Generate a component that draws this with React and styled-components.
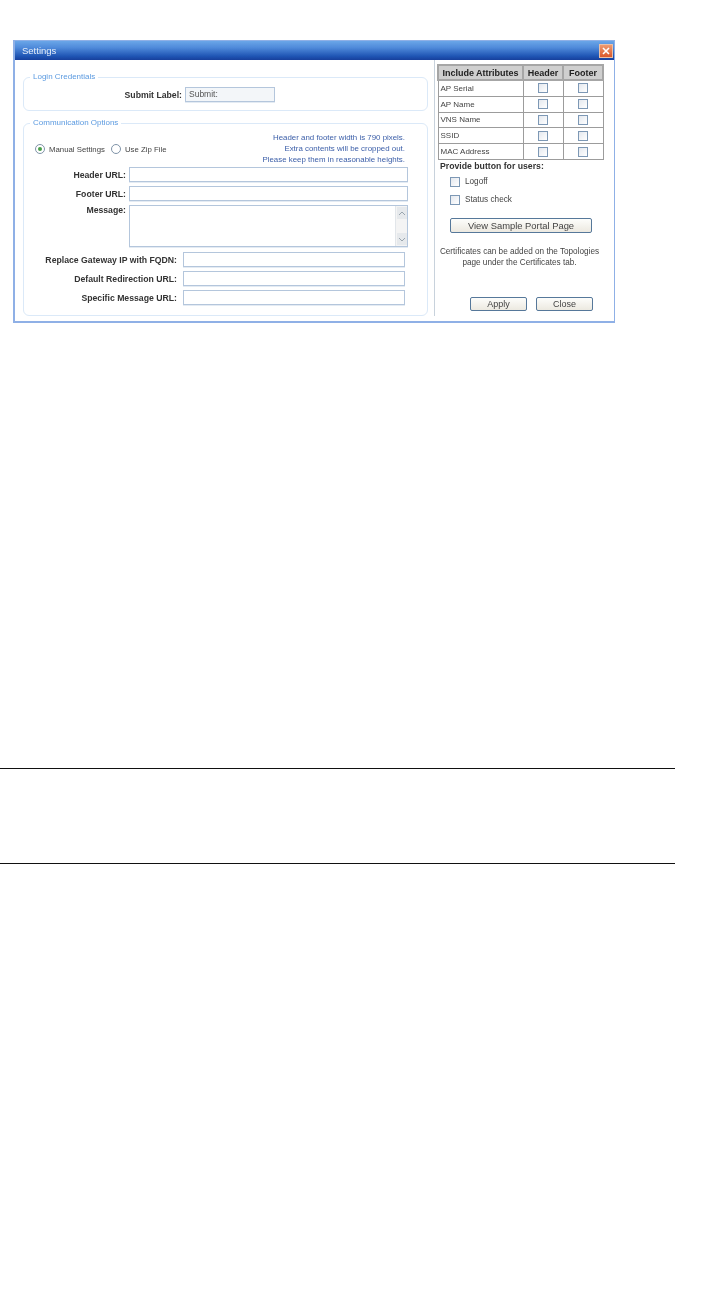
import React from 'react'
import styled, { createGlobalStyle } from 'styled-components'

const Global = createGlobalStyle`
  html, body { margin: 0; padding: 0; background: #fff; }
  body { font-family: "Liberation Sans", Arial, sans-serif; }
`

const Page = styled.div`
  width: 722px;
  height: 1314px;
  padding-top: 40px;
  box-sizing: border-box;
  overflow: hidden;
`

const Dialog = styled.div`
  width: 602px;
  height: 283px;
  margin-left: 13px;
  box-sizing: border-box;
  border: 1px solid #8fb0e6;
  border-bottom-width: 2px;
  border-left-width: 2px;
  display: flex;
  flex-direction: column;
  background: #fff;
  filter: blur(0.6px);
`

const TitleBar = styled.div`
  height: 19px;
  flex: none;
  display: flex;
  align-items: center;
  justify-content: space-between;
  padding: 0 1px 0 7px;
  background: linear-gradient(#6aa6e8 0%, #4f8ada 35%, #1f55b4 80%, #17409c 100%);
  color: #e8f0fb;
  font-size: 9.5px;
`

const CloseBox = styled.div`
  width: 14px;
  height: 14px;
  display: flex;
  align-items: center;
  justify-content: center;
  background: linear-gradient(#ee9a70, #d9582c);
  border: 1px solid #e9c0a8;
  box-sizing: border-box;
`

const Body = styled.div`
  flex: 1;
  display: flex;
  min-height: 0;
`

const LeftPane = styled.div`
  width: 419px;
  flex: none;
  box-sizing: border-box;
  padding: 13px 6px 0 8px;
  display: flex;
  flex-direction: column;
  gap: 8px;
`

const Group = styled.fieldset`
  margin: 0;
  padding: 0;
  border: 1px solid #dbe9f8;
  border-radius: 6px;
  height: ${p => p.$height}px;
  box-sizing: border-box;
  min-width: 0;
`

const Legend = styled.legend`
  margin-left: 6px;
  padding: 0 3px;
  font-size: 8px;
  line-height: 8px;
  color: #5b9ae0;
`

const LoginRow = styled.div`
  display: flex;
  align-items: center;
  gap: 3px;
  padding: 6px 0 0 98px;
`

const Label = styled.div`
  width: ${p => p.$width}px;
  margin-right: ${p => p.$after || 0}px;
  flex: none;
  text-align: right;
  font-size: 8.7px;
  font-weight: bold;
  line-height: 10px;
  color: #333;
  white-space: nowrap;
`

const Field = styled.div`
  width: ${p => p.$width}px;
  height: ${p => p.$height || 15}px;
  flex: none;
  box-sizing: border-box;
  border: 1px solid #b4c6dc;
  box-shadow: 0 1px 0 #e4ebf3;
  background: ${p => p.$tint ? '#f3f6f9' : '#fff'};
  font-size: 8.5px;
  line-height: 13px;
  padding-left: 3px;
  color: #555;
  display: flex;
  justify-content: ${p => p.$scroll ? 'flex-end' : 'flex-start'};
`

const OptionsTop = styled.div`
  display: flex;
  justify-content: space-between;
  height: 40px;
  padding: 5px 22px 0 11px;
  box-sizing: border-box;
`

const Radios = styled.div`
  display: flex;
  align-items: center;
  gap: 4px;
  height: 12px;
  margin-top: 11px;
  font-size: 7.8px;
  color: #444;
`

const Radio = styled.span`
  width: 10px;
  height: 10px;
  box-sizing: border-box;
  border: 1px solid #7f93a8;
  border-radius: 50%;
  background: #fff;
  display: flex;
  align-items: center;
  justify-content: center;
  margin-left: ${p => p.$gap || 0}px;
  &::after {
    content: '';
    display: ${p => p.$on ? 'block' : 'none'};
    width: 4px;
    height: 4px;
    border-radius: 50%;
    background: #4aa04a;
  }
`

const Note = styled.div`
  text-align: right;
  font-size: 7.9px;
  line-height: 11px;
  color: #3b5ea8;
  white-space: nowrap;
`

const Rows = styled.div`
  display: flex;
  flex-direction: column;
  gap: ${p => p.$gap}px;
  margin-top: ${p => p.$top || 0}px;
`

const Row = styled.div`
  display: flex;
  align-items: ${p => p.$top ? 'flex-start' : 'center'};
  gap: 3px;
`

const ScrollTrack = styled.div`
  width: 12px;
  height: 100%;
  background: #f4f4f4;
  display: flex;
  flex-direction: column;
  justify-content: space-between;
  align-items: center;
  padding: 1px 0;
  box-sizing: border-box;
  border-left: 1px solid #e2e6ea;
`

const ScrollBtn = styled.div`
  width: 10px;
  height: 12px;
  background: #e6e9ec;
  display: flex;
  align-items: center;
  justify-content: center;
`

const RightPane = styled.div`
  flex: 1;
  border-left: 1px solid #c8d2dc;
  margin-bottom: 5px;
  padding: 4px 0 0 2px;
  box-sizing: border-box;
  min-width: 0;
`

const Table = styled.table`
  border-collapse: collapse;
  width: 165px;
  table-layout: fixed;
  font-size: 8px;
  color: #444;
`

const Th = styled.th`
  height: 13px;
  padding: 0;
  background: #cfcfcf;
  border: 2px solid #a6a6a6;
  font-size: 9px;
  color: #222;
  white-space: nowrap;
  text-align: center;
`

const Td = styled.td`
  height: 14.8px;
  padding: 0 2px;
  border: 1px solid #9c9c9c;
  text-align: ${p => p.$center ? 'center' : 'left'};
  white-space: nowrap;
`

const Check = styled.span`
  display: inline-block;
  width: 10px;
  height: 10px;
  box-sizing: border-box;
  border: 1px solid #7d98b5;
  background: linear-gradient(135deg, #e4e8ee, #fff);
  vertical-align: middle;
`

const SideTitle = styled.div`
  font-size: 8.7px;
  font-weight: bold;
  color: #333;
  line-height: 10px;
  margin: 1px 0 0 3px;
`

const CheckRow = styled.div`
  display: flex;
  align-items: center;
  gap: 5px;
  height: 18px;
  margin-left: 13px;
  font-size: 8.2px;
  color: #444;
`

const CheckList = styled.div`
  margin-top: 2px;
`

const Button = styled.div`
  width: ${p => p.$width}px;
  height: ${p => p.$height || 14}px;
  box-sizing: border-box;
  border: 1px solid #56789a;
  border-radius: 2px;
  background: linear-gradient(#fdfdfb, #ece9e0);
  font-size: ${p => p.$size || 9}px;
  line-height: ${p => (p.$height || 14) - 2}px;
  text-align: center;
  color: #444;
`

const SampleWrap = styled.div`
  margin: 9px 0 0 13px;
`

const CertNote = styled.div`
  width: 165px;
  margin-top: 13px;
  text-align: center;
  font-size: 8.2px;
  line-height: 11px;
  color: #444;
  white-space: nowrap;
`

const Actions = styled.div`
  display: flex;
  gap: 9px;
  margin: 29px 0 0 33px;
`

const Rule = styled.div`
  width: 675px;
  height: 1px;
  background: #111;
  margin-top: ${p => p.$top}px;
`

const attributes = ['AP Serial', 'AP Name', 'VNS Name', 'SSID', 'MAC Address']

export default function App() {
  return (
    <Page>
      <Global />
      <Dialog>
        <TitleBar>
          Settings
          <CloseBox>
            <svg width="8" height="8" viewBox="0 0 8 8">
              <path d="M1 1 L7 7 M7 1 L1 7" stroke="#fff" strokeWidth="1.6" />
            </svg>
          </CloseBox>
        </TitleBar>
        <Body>
          <LeftPane>
            <Group $height={38}>
              <Legend>Login Credentials</Legend>
              <LoginRow>
                <Label $width={60}>Submit Label:</Label>
                <Field $width={90} $tint>Submit:</Field>
              </LoginRow>
            </Group>
            <Group $height={197}>
              <Legend>Communication Options</Legend>
              <OptionsTop>
                <Radios>
                  <Radio $on />
                  Manual Settings
                  <Radio $gap={2} />
                  Use Zip File
                </Radios>
                <Note>
                  Header and footer width is 790 pixels.<br />
                  Extra contents will be cropped out.<br />
                  Please keep them in reasonable heights.
                </Note>
              </OptionsTop>
              <Rows $gap={4}>
                <Row><Label $width={102}>Header URL:</Label><Field $width={279} /></Row>
                <Row><Label $width={102}>Footer URL:</Label><Field $width={279} /></Row>
                <Row $top>
                  <Label $width={102}>Message:</Label>
                  <Field $width={279} $height={42} $scroll>
                    <ScrollTrack>
                      <ScrollBtn>
                        <svg width="8" height="5" viewBox="0 0 8 5"><path d="M1 4 L4 1 L7 4" fill="none" stroke="#9aa5ae" /></svg>
                      </ScrollBtn>
                      <ScrollBtn>
                        <svg width="8" height="5" viewBox="0 0 8 5"><path d="M1 1 L4 4 L7 1" fill="none" stroke="#9aa5ae" /></svg>
                      </ScrollBtn>
                    </ScrollTrack>
                  </Field>
                </Row>
              </Rows>
              <Rows $gap={4} $top={5}>
                <Row><Label $width={153} $after={3}>Replace Gateway IP with FQDN:</Label><Field $width={222} /></Row>
                <Row><Label $width={153} $after={3}>Default Redirection URL:</Label><Field $width={222} /></Row>
                <Row><Label $width={153} $after={3}>Specific Message URL:</Label><Field $width={222} /></Row>
              </Rows>
            </Group>
          </LeftPane>
          <RightPane>
            <Table>
              <colgroup>
                <col style={{ width: 85 }} />
                <col style={{ width: 40 }} />
                <col style={{ width: 40 }} />
              </colgroup>
              <thead>
                <tr><Th>Include Attributes</Th><Th>Header</Th><Th>Footer</Th></tr>
              </thead>
              <tbody>
                {attributes.map(name => (
                  <tr key={name}>
                    <Td>{name}</Td>
                    <Td $center><Check /></Td>
                    <Td $center><Check /></Td>
                  </tr>
                ))}
              </tbody>
            </Table>
            <SideTitle>Provide button for users:</SideTitle>
            <CheckList>
              <CheckRow><Check />Logoff</CheckRow>
              <CheckRow><Check />Status check</CheckRow>
            </CheckList>
            <SampleWrap><Button $width={142} $height={15} $size={9.4}>View Sample Portal Page</Button></SampleWrap>
            <CertNote>
              Certificates can be added on the Topologies<br />
              page under the Certificates tab.
            </CertNote>
            <Actions>
              <Button $width={57}>Apply</Button>
              <Button $width={57}>Close</Button>
            </Actions>
          </RightPane>
        </Body>
      </Dialog>
      <Rule $top={445} />
      <Rule $top={94} />
    </Page>
  )
}
